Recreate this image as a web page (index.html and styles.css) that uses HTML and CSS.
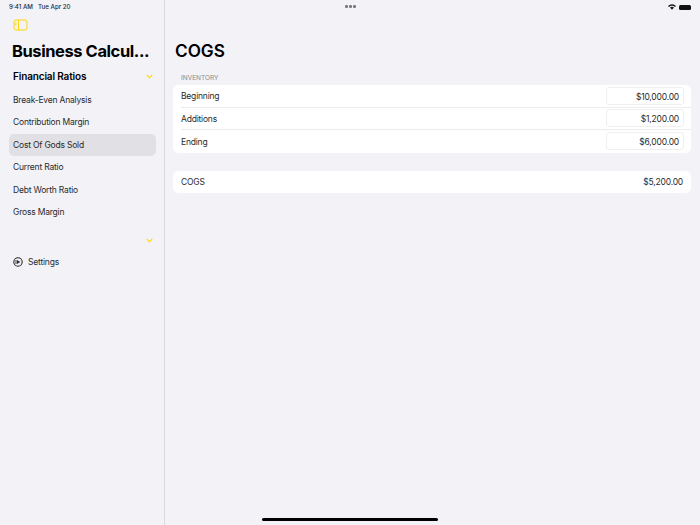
FILE: index.html
```html
<!DOCTYPE html>
<html lang="en">
<head>
  <meta charset="UTF-8">
  <title>Business Calculator</title>
  <link rel="stylesheet" href="styles.css">
</head>
<body>
  <div class="sidebar">
    <div class="status-left">
      <span>9:41 AM</span>
      <span>Tue Apr 20</span>
    </div>
    <div class="toolbar">
      <svg class="toggle-icon" width="15" height="12" viewBox="0 0 15 12">
        <rect x="1" y="1" width="13" height="10" rx="2" fill="none" stroke="#ffd60a" stroke-width="1"/>
        <line x1="5.5" y1="1" x2="5.5" y2="11" stroke="#ffd60a" stroke-width="1"/>
        <line x1="2.8" y1="3.5" x2="2.8" y2="6.5" stroke="#ffd60a" stroke-width="1"/>
      </svg>
    </div>
    <h1 class="app-title">Business Calcul...</h1>
    <div class="group-head">
      <span>Financial Ratios</span>
      <svg class="chevron" width="7" height="5" viewBox="0 0 7 5"><path d="M0.8 1 L3.5 3.8 L6.2 1" fill="none" stroke="#ffd60a" stroke-width="1.1"/></svg>
    </div>
    <ul class="nav-list">
      <li>Break-Even Analysis</li>
      <li>Contribution Margin</li>
      <li class="selected">Cost Of Gods Sold</li>
      <li>Current Ratio</li>
      <li>Debt Worth Ratio</li>
      <li>Gross Margin</li>
    </ul>
    <div class="group-foot">
      <svg class="chevron" width="7" height="5" viewBox="0 0 7 5"><path d="M0.8 1 L3.5 3.8 L6.2 1" fill="none" stroke="#ffd60a" stroke-width="1.1"/></svg>
    </div>
    <div class="settings">
      <svg width="10" height="10" viewBox="0 0 10 10">
        <circle cx="5" cy="5" r="4.2" fill="none" stroke="#2b2b2e" stroke-width="1.1"/>
        <line x1="3" y1="3" x2="3" y2="7" stroke="#2b2b2e" stroke-width="0.9"/>
        <path d="M4 2.9 L7.3 5 L4 7.1 Z" fill="#2b2b2e"/>
      </svg>
      <span>Settings</span>
    </div>
  </div>

  <div class="main">
    <div class="status-right">
      <div class="dots"><i></i><i></i><i></i></div>
      <div class="status-icons">
        <svg width="8" height="6" viewBox="0 0 8 6">
          <path d="M0 2 A5.6 5.6 0 0 1 8 2 L7 3 A4.2 4.2 0 0 0 1 3 Z" fill="#111"/>
          <path d="M2 3.6 A2.9 2.9 0 0 1 6 3.6 L4 5.8 Z" fill="#111"/>
        </svg>
        <div class="battery"></div>
      </div>
    </div>
    <h2 class="page-title">COGS</h2>
    <div class="section-label">INVENTORY</div>
    <div class="card">
      <div class="row">
        <span>Beginning</span>
        <span class="field">$10,000.00</span>
      </div>
      <div class="row">
        <span>Additions</span>
        <span class="field">$1,200.00</span>
      </div>
      <div class="row">
        <span>Ending</span>
        <span class="field">$6,000.00</span>
      </div>
    </div>
    <div class="card total">
      <div class="row">
        <span>COGS</span>
        <span class="value">$5,200.00</span>
      </div>
    </div>
  </div>

  <div class="home-bar"></div>
</body>
</html>
```

FILE: styles.css
```css
* {
  box-sizing: border-box;
}

body {
  display: flex;
  margin: 0;
  height: 525px;
  overflow: hidden;
  background-color: #f2f2f7;
  font-family: Inter, "Noto Sans", sans-serif;
  color: #2a2a2c;
}

.sidebar {
  width: 165px;
  flex-shrink: 0;
  border-right: 1px solid #d9d9de;
  padding: 0 8px 0 9px;
}

.status-left {
  display: flex;
  gap: 5px;
  height: 13px;
  padding-top: 3px;
  font-size: 6.2px;
  font-weight: 500;
  line-height: 7px;
}

.toolbar {
  display: flex;
  height: 27px;
  padding: 6px 0 0 4px;
}

.app-title {
  margin: 0;
  padding-left: 3px;
  height: 26px;
  font-size: 16.5px;
  font-weight: 700;
  line-height: 22px;
  letter-spacing: -0.42px;
  color: #000;
  white-space: nowrap;
}

.group-head {
  display: flex;
  justify-content: space-between;
  align-items: center;
  height: 20px;
  padding: 0 3px 0 4px;
  font-size: 10px;
  font-weight: 600;
  letter-spacing: -0.15px;
  color: #000;
}

.nav-list {
  margin: 2.5px 0 0;
  padding: 0;
  list-style: none;
}

.nav-list li {
  display: flex;
  align-items: center;
  height: 22.5px;
  padding-left: 4px;
  font-size: 8.5px;
  letter-spacing: -0.2px;
  border-radius: 5px;
}

.nav-list li.selected {
  background-color: #e0e0e5;
}

.group-foot {
  display: flex;
  justify-content: flex-end;
  align-items: center;
  height: 28px;
  padding: 6px 3px 0 0;
}

.chevron {
  display: block;
}

.settings {
  display: flex;
  align-items: center;
  gap: 5px;
  height: 16px;
  margin-top: 2.5px;
  padding-left: 4px;
  font-size: 8.5px;
  letter-spacing: -0.2px;
}

.main {
  flex: 1;
  padding: 0 9px 0 8px;
}

.status-right {
  display: flex;
  justify-content: flex-end;
  position: relative;
  height: 12px;
  padding-top: 4px;
}

.dots {
  display: flex;
  gap: 1.5px;
  position: absolute;
  top: 5px;
  left: 172px;
}

.dots i {
  width: 2.5px;
  height: 2.5px;
  border-radius: 50%;
  background-color: #77777c;
}

.status-icons {
  display: flex;
  align-items: center;
  gap: 3px;
  height: 6px;
}

.battery {
  width: 12px;
  height: 5px;
  border-radius: 1.5px;
  background-color: #111;
}

.page-title {
  margin: 0;
  height: 49px;
  padding: 27px 0 0 2px;
  font-size: 17.2px;
  font-weight: 600;
  line-height: 23px;
  color: #000;
}

.section-label {
  height: 24px;
  padding: 13px 0 0 8px;
  font-size: 6.5px;
  line-height: 8px;
  color: #8a8a8e;
}

.card {
  background-color: #fff;
  border-radius: 5px;
  padding-left: 8px;
  font-size: 8.5px;
  letter-spacing: -0.2px;
}

.card.total {
  margin-top: 18px;
}

.row {
  display: flex;
  justify-content: space-between;
  align-items: center;
  height: 22.5px;
  padding-right: 8px;
  border-bottom: 1px solid #ececee;
}

.row:last-child {
  border-bottom: none;
}

.row span:first-child,
.value {
  padding-top: 1px;
}

.field {
  width: 78px;
  height: 18px;
  margin-right: -1px;
  padding-right: 4px;
  border: 1px solid #f0f0f2;
  border-radius: 3px;
  line-height: 18px;
  text-align: right;
}

.home-bar {
  position: absolute;
  left: 262px;
  top: 518px;
  width: 176px;
  height: 3px;
  border-radius: 2px;
  background-color: #000;
}
```
